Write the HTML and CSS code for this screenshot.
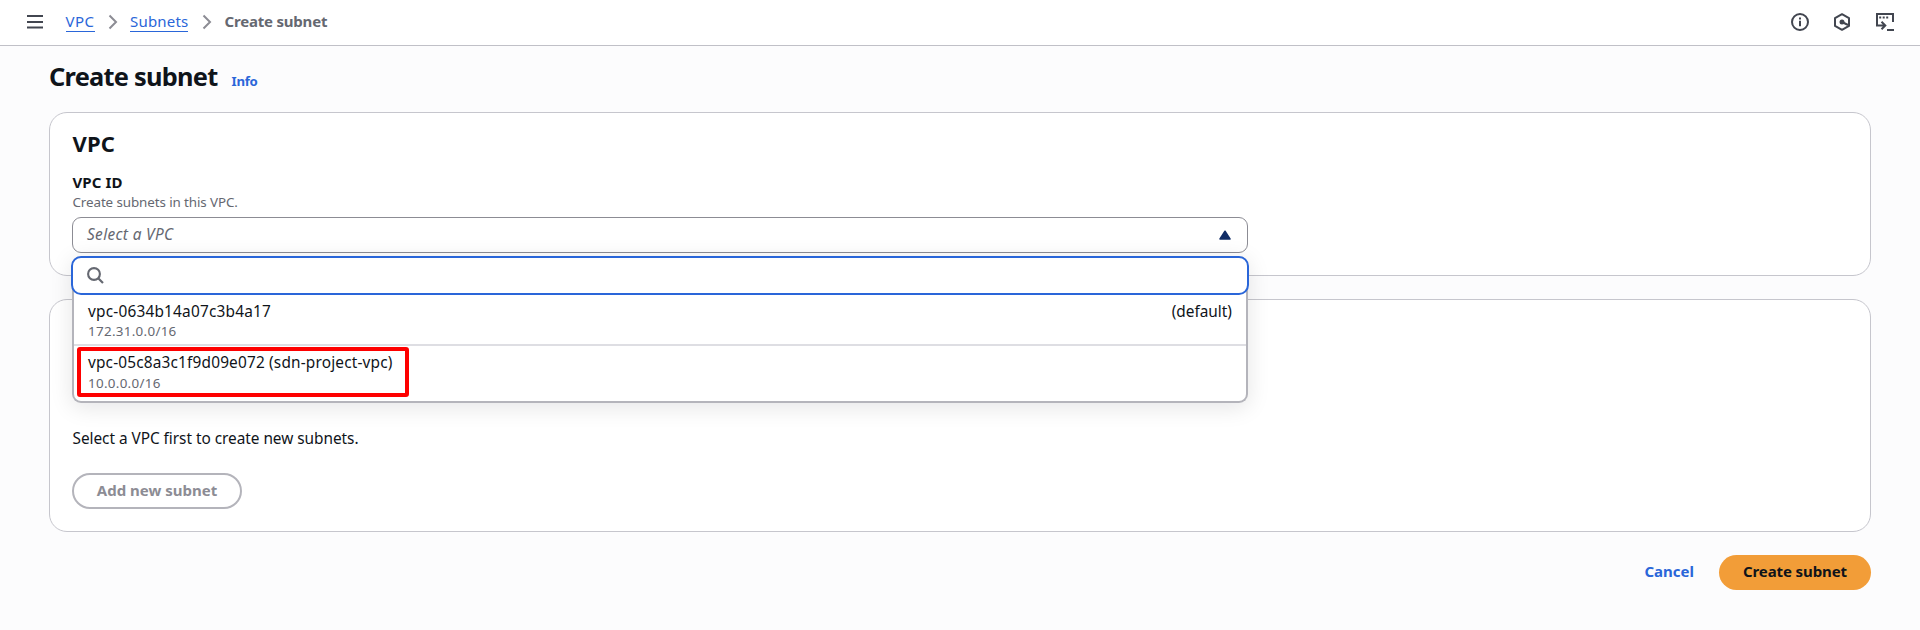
FILE: index.html
```html
<!DOCTYPE html>
<html lang="en">
<head>
<meta charset="utf-8">
<title>Create subnet</title>
<link rel="stylesheet" href="styles.css">
</head>
<body>
<header class="topbar">
  <svg class="menu-icon" width="16" height="16" viewBox="0 0 16 16"><path d="M0 2h16M0 8h16M0 13.500h16" fill="none" stroke="#424650" stroke-width="2"/></svg>
  <nav class="crumbs">
    <a class="crumb crumb-vpc">VPC</a>
    <svg class="chevron" width="10" height="16" viewBox="0 0 10 16"><path d="M1.500 1.500L8 8l-6.500 6.500" fill="none" stroke="#8c8c94" stroke-width="2"/></svg>
    <a class="crumb crumb-subnets">Subnets</a>
    <svg class="chevron" width="10" height="16" viewBox="0 0 10 16"><path d="M1.500 1.500L8 8l-6.500 6.500" fill="none" stroke="#8c8c94" stroke-width="2"/></svg>
    <span class="crumb-current">Create subnet</span>
  </nav>
  <div class="tools">
    <svg width="18" height="18" viewBox="0 0 18 18"><circle cx="9" cy="9" r="8" fill="none" stroke="#424650" stroke-width="2"/><path d="M9 4.500v2M9 7.800V13.300" stroke="#424650" stroke-width="2"/></svg>
    <svg class="hexagon" width="18" height="18" viewBox="0 0 18 18"><path d="M9 1.200l7 3.900v7.800l-7 3.900-7-3.900V5.100z" fill="none" stroke="#424650" stroke-width="2" stroke-linejoin="round"/><circle cx="9" cy="9" r="2.500" fill="#424650"/><path d="M9 9l6 3" stroke="#424650" stroke-width="2"/></svg>
    <svg width="18" height="18" viewBox="0 0 18 18"><path d="M1 13V1h16v8M0 12.500h8.500M5.500 8.700l3.800 3.800-3.800 3.800M11 17h7" fill="none" stroke="#424650" stroke-width="2"/><path d="M3.200 4.500h2M6.700 4.500h2M10.200 4.500h2" stroke="#424650" stroke-width="2"/></svg>
  </div>
</header>
<main class="page">
  <div class="title-row">
    <h1 class="title">Create subnet</h1>
    <a class="info">Info</a>
  </div>
  <section class="card card-vpc">
    <h2 class="card-title">VPC</h2>
    <div class="label">VPC ID</div>
    <div class="hint">Create subnets in this VPC.</div>
    <div class="select">
      <span class="placeholder">Select a VPC</span>
      <svg width="12" height="10" viewBox="0 0 12 10"><path d="M6 1.200L11 9H1z" fill="#102c66" stroke="#102c66" stroke-width="1.500" stroke-linejoin="round"/></svg>
      <div class="dropdown">
        <div class="search"><svg width="17" height="17" viewBox="0 0 17 17"><circle cx="7" cy="7" r="5.900" fill="none" stroke="#656871" stroke-width="2.100"/><path d="M11 11l5 5" stroke="#656871" stroke-width="2.200"/></svg></div>
        <div class="option">
          <div class="option-main"><span>vpc-0634b14a07c3b4a17</span><span class="tag">(default)</span></div>
          <div class="option-sub">172.31.0.0/16</div>
        </div>
        <div class="option option-marked">
          <div class="option-main"><span>vpc-05c8a3c1f9d09e072 (sdn-project-vpc)</span></div>
          <div class="option-sub">10.0.0.0/16</div>
          <div class="marker"></div>
        </div>
      </div>
    </div>
  </section>
  <section class="card card-subnets">
    <p class="message">Select a VPC first to create new subnets.</p>
    <button class="btn btn-add">Add new subnet</button>
  </section>
  <div class="actions">
    <a class="cancel">Cancel</a>
    <button class="btn btn-create">Create subnet</button>
  </div>
</main>
</body>
</html>
```

FILE: styles.css
```css
* { box-sizing: border-box; }
body {
  margin: 0;
  height: 630px;
  overflow: hidden;
  background: #fcfcfd;
  color: #0f141a;
  font-family: "Noto Sans", "Open Sans", sans-serif;
  font-size: 15px;
  line-height: 22px;
}
h1, h2, p { margin: 0; }
.topbar {
  display: flex;
  align-items: flex-start;
  height: 46px;
  padding: 10px 26px 0 27px;
  background: #fff;
  border-bottom: 1px solid #c0c0c7;
}
.menu-icon { margin-top: 4px; }
.crumbs { display: flex; margin-left: 22.5px; white-space: nowrap; }
.crumb { height: 22px; color: #2a66d9; border-bottom: 1px solid #2a66d9; }
.crumb-vpc { width: 29px; letter-spacing: 0.45px; }
.crumb-subnets { width: 58px; letter-spacing: 0.2px; }
.chevron { margin: 4px 12px 0 13.5px; }
.crumb-current { margin-left: 1px; color: #656871; font-weight: 700; letter-spacing: -0.2px; }
.tools { display: flex; gap: 24px; margin: 3px 0 0 auto; }
.hexagon { margin-right: 1px; }
.page { padding: 0 49px; }
.title-row { display: flex; align-items: baseline; height: 66px; padding-top: 13px; }
.title { font-size: 25.4px; line-height: 34px; font-weight: 700; letter-spacing: -0.75px; }
.info { margin-left: 14px; color: #2a66d9; font-size: 13.2px; font-weight: 700; letter-spacing: -0.25px; }
.card { border: 1px solid #c6c6cd; border-radius: 18px; background: #fff; padding: 0 22px; white-space: nowrap; }
.card-vpc { height: 164px; padding-top: 15px; }
.card-title { font-size: 22px; line-height: 30px; font-weight: 700; letter-spacing: 0.2px; }
.card-title, .label, .hint, .message { padding-left: 0.5px; }
.label { margin-top: 13px; font-weight: 700; letter-spacing: 0.1px; }
.hint { height: 24px; color: #656871; font-size: 13.4px; line-height: 18px; letter-spacing: -0.1px; }
.select {
  position: relative;
  display: flex;
  align-items: center;
  justify-content: space-between;
  width: 1176px;
  height: 36px;
  padding: 0 16px 0 14px;
  border: 1px solid #8c8c94;
  border-radius: 9px;
}
.placeholder { color: #656871; font-size: 15.4px; font-style: italic; letter-spacing: 0.35px; }
.dropdown {
  position: absolute;
  z-index: 1;
  top: 38px;
  left: -1px;
  width: 1176px;
  height: 147px;
  background: #fff;
  border: 2px solid #b4b4bb;
  border-top: 0;
  border-radius: 9px;
  box-shadow: 0 4px 22px 1px rgba(0, 7, 22, 0.1);
}
.search {
  height: 39px;
  margin: 0 -3px;
  padding: 9px 14px;
  background: #fff;
  border: 2px solid #2a66d9;
  border-radius: 10px;
}
.search svg { display: block; }
.option { position: relative; height: 51px; padding: 6px 14px 0; border-bottom: 2px solid #dedee3; }
.option-marked { border: 0; }
.option-main { display: flex; justify-content: space-between; height: 21px; font-size: 15.4px; letter-spacing: 0.2px; }
.option-marked .option-main { letter-spacing: 0.17px; }
.option-main .tag { letter-spacing: 0; }
.option-sub { color: #656871; font-size: 13.4px; line-height: 18px; letter-spacing: 0.3px; }
.option-marked .option-sub { line-height: 20px; }
.marker { position: absolute; top: 1px; left: 3px; width: 332px; height: 50px; border: 4px solid #fe0000; border-radius: 3px; }
.card-subnets { height: 233px; margin-top: 23px; padding-top: 128px; }
.message { font-size: 15.4px; letter-spacing: -0.04px; }
.btn { display: block; height: 36px; padding: 0; border-radius: 18px; font: 700 15px/22px "Noto Sans", sans-serif; }
.btn-add { width: 170px; margin-top: 23px; padding-bottom: 2px; color: #8c8c94; background: #fff; border: 2px solid #b4b4bb; }
.actions { display: flex; justify-content: flex-end; align-items: center; margin-top: 23px; gap: 25px; }
.cancel { margin-top: -3px; color: #2a66d9; font-weight: 700; }
.btn-create { width: 152px; height: 35px; padding-bottom: 3px; color: #0f141a; background: #f29d38; border: 0; letter-spacing: -0.1px; }
```
